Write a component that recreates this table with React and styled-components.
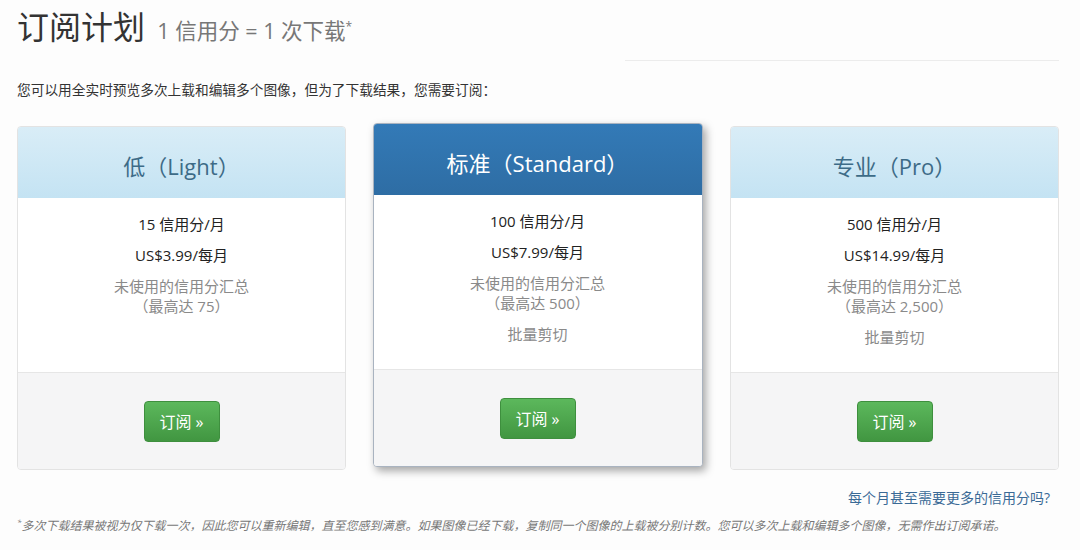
import React from "react";
import styled, { createGlobalStyle, css } from "styled-components";

const GlobalStyle = createGlobalStyle`
  body {
    margin: 0;
    background: #fdfdfd;
    font-family: "Open Sans", "Noto Sans CJK SC", sans-serif;
    color: #333;
  }
`;

const plans = [
  {
    name: "低（Light）",
    credits: "15 信用分/月",
    price: "US$3.99/每月",
    max: "75",
    bulk: false,
  },
  {
    name: "标准（Standard）",
    credits: "100 信用分/月",
    price: "US$7.99/每月",
    max: "500",
    bulk: true,
    featured: true,
  },
  {
    name: "专业（Pro）",
    credits: "500 信用分/月",
    price: "US$14.99/每月",
    max: "2,500",
    bulk: true,
  },
];

function App() {
  return (
    <Page>
      <GlobalStyle />
      <Header>
        <Title>
          订阅计划 <small>1 信用分 = 1 次下载<sup>*</sup></small>
        </Title>
        <Rule />
      </Header>
      <Lead>您可以用全实时预览多次上载和编辑多个图像，但为了下载结果，您需要订阅：</Lead>
      <Plans>
        {plans.map((p) => (
          <Card key={p.name} $featured={p.featured}>
            <CardHead $featured={p.featured}>{p.name}</CardHead>
            <CardBody>
              <Item>{p.credits}</Item>
              <Item>{p.price}</Item>
              <Item $muted>
                未使用的信用分汇总
                <br />
                （最高达 {p.max}）
              </Item>
              {p.bulk && <Item $muted>批量剪切</Item>}
            </CardBody>
            <CardFoot>
              <SubscribeButton>订阅 »</SubscribeButton>
            </CardFoot>
          </Card>
        ))}
      </Plans>
      <MoreLink href="#">每个月甚至需要更多的信用分吗?</MoreLink>
      <Footnote>
        <sup>*</sup>多次下载结果被视为仅下载一次，因此您可以重新编辑，直至您感到满意。如果图像已经下载，复制同一个图像的上载被分别计数。您可以多次上载和编辑多个图像，无需作出订阅承诺。
      </Footnote>
    </Page>
  );
}

const Page = styled.div`
  width: 1042px;
  padding: 0 21px 0 17px;
`;

const Header = styled.div`
  display: flex;
  align-items: flex-end;
  height: 61px;
`;

const Title = styled.h1`
  margin: 0;
  align-self: flex-start;
  padding-top: 8px;
  font-size: 32px;
  font-weight: 400;
  line-height: 38px;
  color: #333;
  small {
    margin-left: 4px;
    font-size: 21.5px;
    color: #777;
  }
  sup {
    font-size: 12px;
    vertical-align: 8px;
    line-height: 0;
  }
`;

const Rule = styled.div`
  margin-left: auto;
  width: 434px;
  border-bottom: 1px solid #ececec;
`;

const Lead = styled.p`
  margin: 20px 0 0;
  font-size: 13.7px;
  line-height: 18px;
`;

const Plans = styled.div`
  display: grid;
  grid-template-columns: repeat(3, 329px);
  justify-content: space-between;
  align-items: start;
  margin-top: 24px;
`;

const Card = styled.div`
  display: flex;
  flex-direction: column;
  height: 344px;
  box-sizing: border-box;
  margin-top: 3px;
  border: 1px solid #e3e3e3;
  border-radius: 4px;
  overflow: hidden;
  background: #fff;
  ${(p) =>
    p.$featured &&
    css`
      margin-top: 0;
      margin-left: -1px;
      border-color: #a9b3c0;
      box-shadow: 3px 4px 8px rgba(0, 0, 0, 0.35);
    `}
`;

const CardHead = styled.div`
  height: 71px;
  display: flex;
  align-items: center;
  justify-content: center;
  padding-top: 4px;
  box-sizing: border-box;
  font-size: 22px;
  color: #3d6b87;
  background: linear-gradient(#d9edf7, #c4e3f3);
  ${(p) =>
    p.$featured &&
    css`
      color: #fff;
      background: linear-gradient(#337ab7, #2e6da4);
    `}
`;

const CardBody = styled.ul`
  flex: 1;
  list-style: none;
  margin: 0;
  padding: 10px 0;
  text-align: center;
  border-bottom: 1px solid #e6e6e6;
`;

const Item = styled.li`
  padding: 5.5px 0;
  font-size: 15px;
  line-height: 20px;
  color: ${(p) => (p.$muted ? "#8a8a8a" : "#222")};
`;

const CardFoot = styled.div`
  height: 96px;
  flex: none;
  display: flex;
  align-items: center;
  justify-content: center;
  background: #f5f5f6;
`;

const SubscribeButton = styled.button`
  width: 76px;
  height: 41px;
  border: 1px solid #3e8f3e;
  border-radius: 4px;
  background: linear-gradient(#5cb85c, #419641);
  color: #fff;
  font-family: inherit;
  font-size: 16px;
  cursor: pointer;
`;

const MoreLink = styled.a`
  display: block;
  text-align: right;
  margin: 19px 9px 0 0;
  font-size: 14px;
  line-height: 18px;
  color: #3a6a96;
  text-decoration: none;
`;

const Footnote = styled.p`
  margin: 9px 0 0;
  font-size: 12px;
  font-style: italic;
  color: #777;
  sup {
    font-size: 8px;
  }
`;

export default App;
